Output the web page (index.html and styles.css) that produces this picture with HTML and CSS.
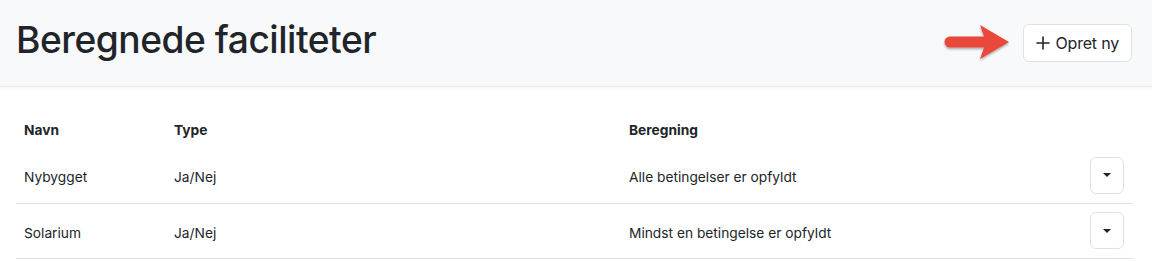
FILE: index.html
```html
<!DOCTYPE html>
<html lang="da">
<head>
<meta charset="utf-8">
<link rel="stylesheet" href="styles.css">
</head>
<body>
<header class="page-header">
  <h1 class="title">Beregnede faciliteter</h1>
  <div class="actions">
    <svg class="arrow" width="70" height="44" viewBox="0 0 70 44">
      <defs>
        <filter id="sh" x="-20%" y="-20%" width="140%" height="150%">
          <feDropShadow dx="0" dy="1.5" stdDeviation="1.2" flood-color="#000" flood-opacity="0.35"/>
        </filter>
      </defs>
      <path filter="url(#sh)" fill="#e9483b" d="M7 15.5 H41 L37 4 L66 21 L37 38 L41 26.5 H7 A5.5 5.5 0 0 1 7 15.5 Z"/>
    </svg>
    <button class="btn-new">
      <svg class="plus" width="14" height="14" viewBox="0 0 14 14"><path d="M7 1v12M1 7h12" stroke="#212529" stroke-width="1.6" stroke-linecap="round"/></svg>
      <span>Opret ny</span>
    </button>
  </div>
</header>
<main class="content">
  <table class="grid">
    <thead>
      <tr>
        <th class="c-name">Navn</th>
        <th class="c-type">Type</th>
        <th class="c-calc">Beregning</th>
        <th class="c-act"></th>
      </tr>
    </thead>
    <tbody>
      <tr>
        <td>Nybygget</td>
        <td>Ja/Nej</td>
        <td>Alle betingelser er opfyldt</td>
        <td class="c-act"><button class="btn-drop"><span class="caret"></span></button></td>
      </tr>
      <tr>
        <td>Solarium</td>
        <td>Ja/Nej</td>
        <td>Mindst en betingelse er opfyldt</td>
        <td class="c-act"><button class="btn-drop"><span class="caret"></span></button></td>
      </tr>
    </tbody>
  </table>
</main>
</body>
</html>
```
FILE: styles.css
```css
* { box-sizing: border-box; }
html, body { margin: 0; padding: 0; background: #fff; }
body {
  font-family: Inter, "Helvetica Neue", "Liberation Sans", Arial, sans-serif;
  color: #212529;
}
.page-header {
  height: 87px;
  background: #f8f9fa;
  border-bottom: 1px solid #e9ecef;
  box-shadow: 0 2px 4px rgba(0,0,0,0.03);
  display: flex;
  align-items: center;
  justify-content: space-between;
  padding: 0 20px 0 16px;
}
.title {
  margin: 0;
  font-size: 37.2px;
  font-weight: 500;
  letter-spacing: -0.5px;
  line-height: 1.2;
  position: relative;
  top: -3px;
}
.actions {
  display: flex;
  align-items: center;
  gap: 10px;
  margin-top: -1px;
}
.arrow { display: block; margin-top: 1px; }
.btn-new {
  display: flex;
  align-items: center;
  gap: 6px;
  height: 38px;
  padding: 0 12px 0 12px;
  background: #fff;
  border: 1px solid #dee2e6;
  border-radius: 6px;
  font-family: inherit;
  font-size: 16px;
  letter-spacing: -0.2px;
  color: #212529;
  cursor: pointer;
}
.plus { display: block; }
.content { padding: 20px 19px 0 16px; }
.grid {
  width: 100%;
  border-collapse: collapse;
  font-size: 13.75px;
}
.grid th {
  text-align: left;
  font-weight: 700;
  padding: 14px 8px 9px;
  line-height: 18px;
  height: 41px;
}
.grid td {
  padding: 10px 8px 6px;
  height: 55px;
  border-bottom: 1px solid #dee2e6;
  vertical-align: middle;
}
.c-name { width: 150px; }
.c-type { width: 455px; }
.c-act { width: 50px; text-align: right; }
.grid td.c-act { padding: 8px 9px 8px 8px; }
.btn-drop {
  width: 34px;
  height: 37px;
  background: #fff;
  border: 1px solid #dee2e6;
  border-radius: 6px;
  display: inline-flex;
  align-items: center;
  justify-content: center;
  padding: 0;
  vertical-align: middle;
}
.caret {
  width: 0; height: 0;
  border-left: 4px solid transparent;
  border-right: 4px solid transparent;
  border-top: 4px solid #212529;
}
```
